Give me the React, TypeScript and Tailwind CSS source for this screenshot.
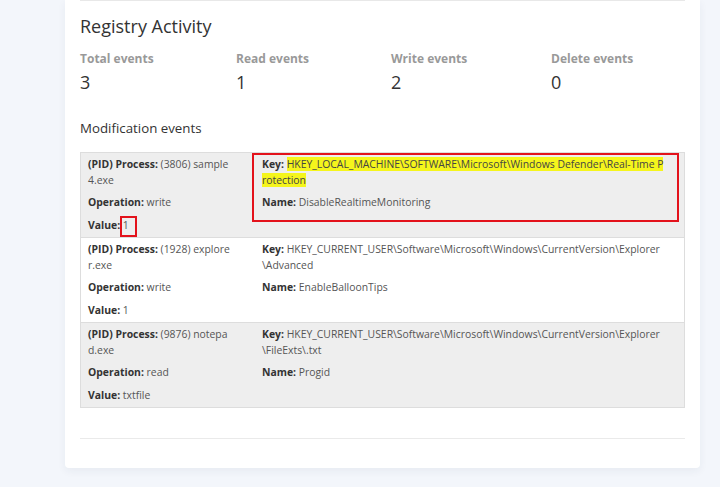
import React from "react";

type Row = {
  pid: string[];
  op: string;
  value: string;
  key: string[];
  name: string;
  gray: boolean;
  highlight?: boolean;
};

const rows: Row[] = [
  {
    pid: ["(3806) sample", "4.exe"],
    op: "write",
    value: "1",
    key: ["HKEY_LOCAL_MACHINE\\SOFTWARE\\Microsoft\\Windows Defender\\Real-Time P", "rotection"],
    name: "DisableRealtimeMonitoring",
    gray: true,
    highlight: true,
  },
  {
    pid: ["(1928) explore", "r.exe"],
    op: "write",
    value: "1",
    key: ["HKEY_CURRENT_USER\\Software\\Microsoft\\Windows\\CurrentVersion\\Explorer", "\\Advanced"],
    name: "EnableBalloonTips",
    gray: false,
  },
  {
    pid: ["(9876) notepa", "d.exe"],
    op: "read",
    value: "txtfile",
    key: ["HKEY_CURRENT_USER\\Software\\Microsoft\\Windows\\CurrentVersion\\Explorer", "\\FileExts\\.txt"],
    name: "Progid",
    gray: true,
  },
];

const stats = [
  { label: "Total events", value: "3", w: "w-[156px]" },
  { label: "Read events", value: "1", w: "w-[155px]" },
  { label: "Write events", value: "2", w: "w-[160px]" },
  { label: "Delete events", value: "0", w: "w-[134px]" },
];

export default function App() {
  return (
    <div className="min-h-screen bg-[#f3f6fb] font-['Open_Sans',sans-serif]">
      <div className="ml-[65px] w-[635px] bg-white rounded-b-[4px] shadow-[0_3px_8px_rgba(30,50,90,0.06)] px-[15px] pb-[29px]">
        <div className="h-px bg-[#e8e8e8]" />
        <h2 className="mt-[13px] text-[18px] leading-6 text-[#333]">Registry Activity</h2>
        <div className="mt-[13px] flex">
          {stats.map((s) => (
            <div key={s.label} className={s.w}>
              <div className="text-[12px] leading-4 font-bold text-[#999]">{s.label}</div>
              <div className="mt-[3px] text-[18px] leading-6 text-[#333]">{s.value}</div>
            </div>
          ))}
        </div>
        <h3 className="mt-[24px] text-[13.3px] leading-5 text-[#333]">Modification events</h3>
        <div className="relative mt-[14px] border border-[#ddd] text-[10.4px] leading-[15.5px] text-[#555]">
          {rows.map((r, i) => (
            <div
              key={i}
              className={`flex ${i > 0 ? "border-t border-[#ddd]" : ""} ${r.gray ? "bg-[#eeeeee]" : "bg-white"}`}
            >
              <div className="w-[171px] pl-[7px] py-1 flex flex-col gap-[7px]">
                <p className="whitespace-nowrap">
                  <b className="text-[#333]">(PID) Process:</b> {r.pid[0]}
                  <br />
                  {r.pid[1]}
                </p>
                <p className="whitespace-nowrap">
                  <b className="text-[#333]">Operation:</b> {r.op}
                </p>
                <p className="whitespace-nowrap">
                  <b className="text-[#333]">Value:</b> {r.value}
                </p>
              </div>
              <div className="flex-1 pl-[10px] py-1 flex flex-col gap-[7px]">
                <p className="whitespace-nowrap">
                  <b className="text-[#333]">Key:</b>{" "}
                  {r.highlight ? (
                    <>
                      <span className="bg-[#f5f51c] text-[#444]">{r.key[0]}</span>
                      <br />
                      <span className="bg-[#f5f51c] text-[#444]">{r.key[1]} </span>
                    </>
                  ) : (
                    <>
                      {r.key[0]}
                      <br />
                      {r.key[1]}
                    </>
                  )}
                </p>
                <p className="whitespace-nowrap">
                  <b className="text-[#333]">Name:</b> {r.name}
                </p>
              </div>
            </div>
          ))}
          <div className="pointer-events-none absolute left-[171px] top-0 w-[427px] h-[69px] border-2 border-[#e3121b]" />
          <div className="pointer-events-none absolute left-[39px] top-[63px] w-[17px] h-[21px] border-2 border-[#e3121b]" />
        </div>
        <div className="mt-[30px] h-px bg-[#eaeaea]" />
      </div>
    </div>
  );
}
